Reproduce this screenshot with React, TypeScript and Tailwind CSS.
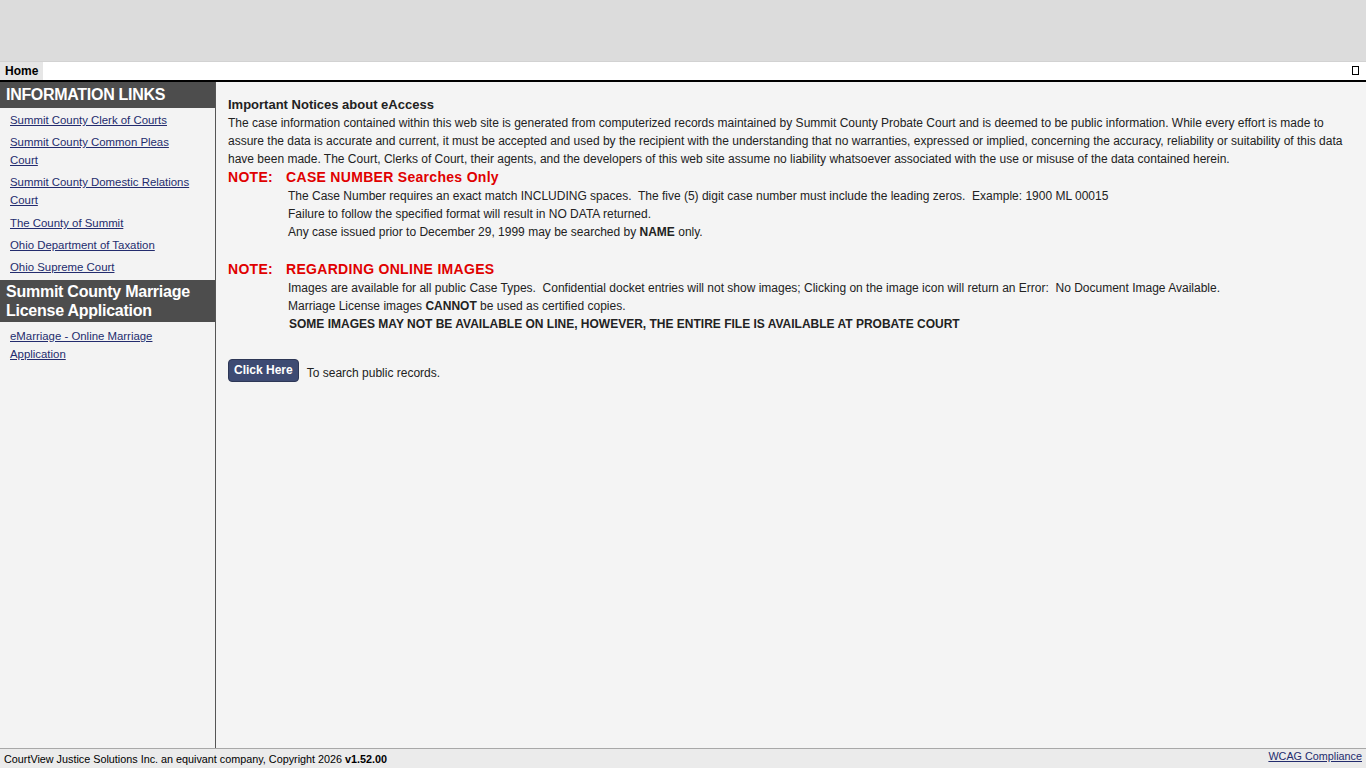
import React from 'react';

const sideLinks = [
  'Summit County Clerk of Courts',
  'Summit County Common Pleas Court',
  'Summit County Domestic Relations Court',
  'The County of Summit',
  'Ohio Department of Taxation',
  'Ohio Supreme Court',
];

export default function App() {
  return (
    <div className="h-screen flex flex-col bg-[#f4f4f4] text-[#222] font-['Liberation_Sans',Arial,sans-serif] overflow-hidden">
      {/* Header */}
      <div className="h-[62px] bg-[#dcdcdc] border-b border-[#d2d2d2]" />

      {/* Nav */}
      <div className="h-[20px] bg-white border-b-2 border-black flex items-start justify-between">
        <div className="h-[18px] bg-[#e6e6e6] px-[5px] text-[12px] font-bold leading-[18px] text-black">Home</div>
        <div className="w-[7px] h-[9px] border border-black mt-[4px] mr-[7px]" />
      </div>

      {/* Body */}
      <div className="flex-1 flex min-h-0">
        {/* Sidebar */}
        <div className="w-[216px] shrink-0 bg-[#f3f3f3] border-r border-[#555]">
          <div className="bg-[#4d4d4d] text-white font-bold text-[16px] tracking-[-0.3px] leading-[26px] px-[6px]">INFORMATION LINKS</div>
          <ul className="pt-[3px] pl-[10px] pr-[20px] flex flex-col gap-[4px]">
            {sideLinks.map((l, i) => (
              <li key={l} className={`text-[11.4px] leading-[18px] ${i === 3 ? 'mt-[1px]' : ''}`}>
                <a href="#" className="text-[#232c6e] underline">{l}</a>
              </li>
            ))}
          </ul>
          <div className="mt-[4px] bg-[#4d4d4d] text-white font-bold text-[16px] tracking-[-0.25px] leading-[19px] px-[6px] py-[2px]">
            Summit County Marriage License Application
          </div>
          <div className="pt-[5px] pl-[10px] pr-[20px] text-[11.4px] leading-[18px]">
            <a href="#" className="text-[#232c6e] underline">eMarriage - Online Marriage Application</a>
          </div>
        </div>

        {/* Main */}
        <div className="flex-1 pt-[13px] pl-[12px] pr-[12px] text-[12px] leading-[18px]">
          <div className="text-[13px] font-bold leading-[19px]">Important Notices about eAccess</div>
          <p>
            The case information contained within this web site is generated from computerized records maintained by Summit County Probate Court and is deemed to be public information. While every effort is made to assure the data is accurate and current, it must be accepted and used by the recipient with the understanding that no warranties, expressed or implied, concerning the accuracy, reliability or suitability of this data have been made. The Court, Clerks of Court, their agents, and the developers of this web site assume no liability whatsoever associated with the use or misuse of the data contained herein.
          </p>

          <div className="text-[14px] font-bold text-[#e00000] tracking-[0.3px] leading-[19px]">
            NOTE:<span className="ml-[13px]">CASE NUMBER Searches Only</span>
          </div>
          <div className="pl-[60px] whitespace-pre">
            <div>The Case Number requires an exact match INCLUDING spaces.  The five (5) digit case number must include the leading zeros.  Example: 1900 ML 00015</div>
            <div>Failure to follow the specified format will result in NO DATA returned.</div>
            <div>Any case issued prior to December 29, 1999 may be searched by <b>NAME</b> only.</div>
          </div>

          <div className="mt-[19px] text-[14px] font-bold text-[#e00000] tracking-[0.3px] leading-[19px]">
            NOTE:<span className="ml-[13px]">REGARDING ONLINE IMAGES</span>
          </div>
          <div className="pl-[60px] whitespace-pre">
            <div>Images are available for all public Case Types.  Confidential docket entries will not show images; Clicking on the image icon will return an Error:  No Document Image Available.</div>
            <div>Marriage License images <b>CANNOT</b> be used as certified copies.</div>
            <div className="font-bold pl-[1px]">SOME IMAGES MAY NOT BE AVAILABLE ON LINE, HOWEVER, THE ENTIRE FILE IS AVAILABLE AT PROBATE COURT</div>
          </div>

          <div className="mt-[25px] flex items-center gap-[8px]">
            <button className="h-[23px] px-[5px] rounded-[4px] bg-[#3e4b73] border border-[#2d3756] text-white font-bold text-[12px]">Click Here</button>
            <span className="mt-[6px]">To search public records.</span>
          </div>
        </div>
      </div>

      {/* Footer */}
      <div className="h-[20px] bg-[#ebebeb] border-t border-[#a8a8a8] flex justify-between items-start px-[4px] text-[10.8px]">
        <span className="leading-[20px] text-black">
          CourtView Justice Solutions Inc. an equivant company, Copyright 2026 <b>v1.52.00</b>
        </span>
        <a href="#" className="leading-[14px] text-[#232c6e] underline">WCAG Compliance</a>
      </div>
    </div>
  );
}
